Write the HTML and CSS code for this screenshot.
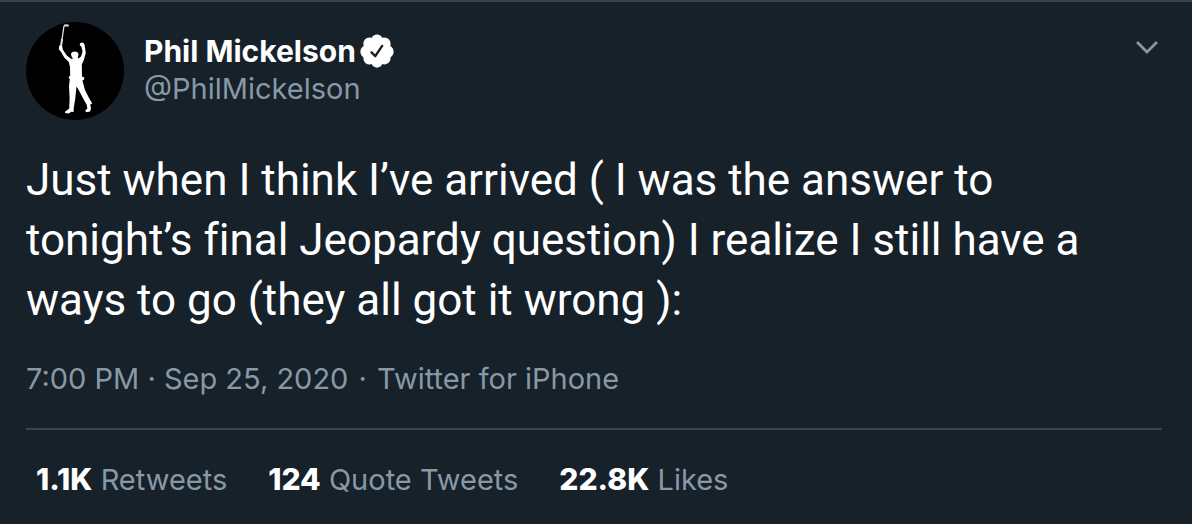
FILE: index.html
```html
<!DOCTYPE html>
<html lang="en">
<head>
    <meta charset="UTF-8">
    <meta name="viewport" content="width=device-width, initial-scale=1.0">
    <title>Phil Mickelson on Twitter</title>
    <link rel="stylesheet" href="styles.css">
</head>
<body>
    <article class="tweet">
        <header class="tweet-header">
            <a class="avatar" href="#" aria-label="Phil Mickelson">
                <svg viewBox="0 0 98 98" aria-hidden="true">
                    <path class="club" d="M42.5 3.6L38.6 3.2L37.8 5L35 25"/>
                    <path class="grip" d="M42.6 3.6L38.8 3.4M36 17L34.8 26"/>
                    <path d="M33.2 23.5L36 23.8L37 28L41 33.8L45.6 37L47 36.5L45.4 34.2L45 31.6Q46 29.6 48.5 29.6Q52.2 29.6 52.6 32.6L51.8 35.6L52.4 36.6L55 34.4L56.6 29.5L55.4 24.8L53.8 23.2Q53.6 20.4 56 20.4Q58.4 20.4 58.6 23L59.8 31L57.8 38L55.8 42.5L56 54.5L58.4 55.6L57.8 58L56.4 58.6L59 68L63 76L66.2 81.2L64.2 82.8L65 86L64.2 89.6L60.2 90.2L59.2 88.6L61.4 86.5L60.6 82.6L57.4 77L52.4 67.5L50.5 64.5L49.2 77L47.8 85.6L47.6 90L45.4 89.8L42.5 91.6L39 91L39.2 89.4L43.2 86.6L43.6 76L43 64L43.8 57L42.8 56.2L43 54.5L44.2 54L44 45L42.8 40L38.4 35.8L34.8 29.5L32.8 27.5Z"/>
                </svg>
            </a>
            <div class="author">
                <div class="name-row">
                    <a class="name" href="#">Phil Mickelson</a>
                    <svg class="verified" viewBox="0 0 24 24" role="img" aria-label="Verified account">
                        <path d="M22.5 12.5c0-1.58-.875-2.95-2.148-3.6.154-.435.238-.905.238-1.4 0-2.21-1.71-3.998-3.818-3.998-.47 0-.92.084-1.336.25C14.818 2.415 13.51 1.5 12 1.5s-2.816.917-3.437 2.25c-.415-.165-.866-.25-1.336-.25-2.11 0-3.818 1.79-3.818 4 0 .494.083.964.237 1.4-1.272.65-2.147 2.018-2.147 3.6 0 1.495.782 2.798 1.942 3.486-.02.17-.032.34-.032.514 0 2.21 1.708 4 3.818 4 .47 0 .92-.086 1.335-.25.62 1.334 1.926 2.25 3.437 2.25 1.512 0 2.818-.916 3.437-2.25.415.163.865.248 1.336.248 2.11 0 3.818-1.79 3.818-4 0-.174-.012-.344-.033-.513 1.158-.687 1.943-1.99 1.943-3.484zm-6.616-3.334l-4.334 6.5c-.145.217-.382.334-.625.334-.143 0-.288-.04-.416-.126l-.115-.094-2.415-2.415c-.293-.293-.293-.768 0-1.06s.768-.294 1.06 0l1.77 1.767 3.825-5.74c.23-.345.696-.436 1.04-.207.346.23.44.696.21 1.04z"/>
                    </svg>
                </div>
                <a class="handle" href="#">@PhilMickelson</a>
            </div>
            <button class="more" type="button" aria-label="More">
                <svg viewBox="0 0 24 14" aria-hidden="true">
                    <path d="M2 2L12 12L22 2"/>
                </svg>
            </button>
        </header>

        <p class="tweet-text">Just when I think I’ve arrived ( I was the answer to<br>
            tonight’s final Jeopardy question) I realize I still have a<br>
            ways to go (they all got it wrong ):</p>

        <div class="meta">
            <a href="#">7:00 PM · Sep 25, 2020</a>
            <span class="dot">·</span>
            <a href="#">Twitter for iPhone</a>
        </div>

        <div class="stats">
            <a href="#"><strong>1.1K</strong> Retweets</a>
            <a href="#"><strong>124</strong> Quote Tweets</a>
            <a href="#"><strong>22.8K</strong> Likes</a>
        </div>
    </article>
</body>
</html>
```
FILE: styles.css
```css
body {
    margin: 0;
    background-color: #17212a;
    color: #fff;
    font-family: Inter, Roboto, sans-serif;
    font-size: 29px;
    line-height: 38px;
}
a {
    color: inherit;
    text-decoration: none;
}
.tweet {
    border-top: 2px solid #38444d;
    padding: 20px 30px 24px 26px;
}
.tweet-header {
    display: flex;
    align-items: flex-start;
    gap: 20px;
}
.avatar {
    width: 98px;
    height: 98px;
    flex-shrink: 0;
    border-radius: 50%;
    background-color: #000;
    overflow: hidden;
}
.avatar svg {
    display: block;
    fill: #fff;
}
.avatar .club,
.avatar .grip {
    fill: none;
    stroke: #ddd;
    stroke-width: 1.3;
}
.avatar .grip {
    stroke-width: 2;
}
.author {
    flex: 1;
    padding-top: 10px;
}
.name-row {
    display: flex;
    align-items: center;
    gap: 2px;
}
.name {
    font-size: 30px;
    font-weight: 700;
}
.verified {
    width: 38px;
    height: 38px;
    fill: #fff;
}
.handle,
.meta,
.stats {
    color: #8899a6;
}
.more {
    padding: 18px 3px;
    border: none;
    background: none;
    cursor: pointer;
}
.more svg {
    display: block;
    width: 24px;
    height: 14px;
    fill: none;
    stroke: #8899a6;
    stroke-width: 2.8;
}
.tweet-text {
    margin: 30px 0;
    font-family: Roboto, Inter, sans-serif;
    font-size: 44px;
    font-variant-ligatures: none;
    line-height: 60px;
}
.meta {
    padding-bottom: 30px;
    border-bottom: 2px solid #38444d;
}
.dot {
    padding: 0 2px;
}
.stats {
    display: flex;
    flex-wrap: wrap;
    gap: 41px;
    padding: 30px 10px 0;
}
.stats strong {
    color: #fff;
    font-size: 30px;
    font-weight: 800;
}
```
